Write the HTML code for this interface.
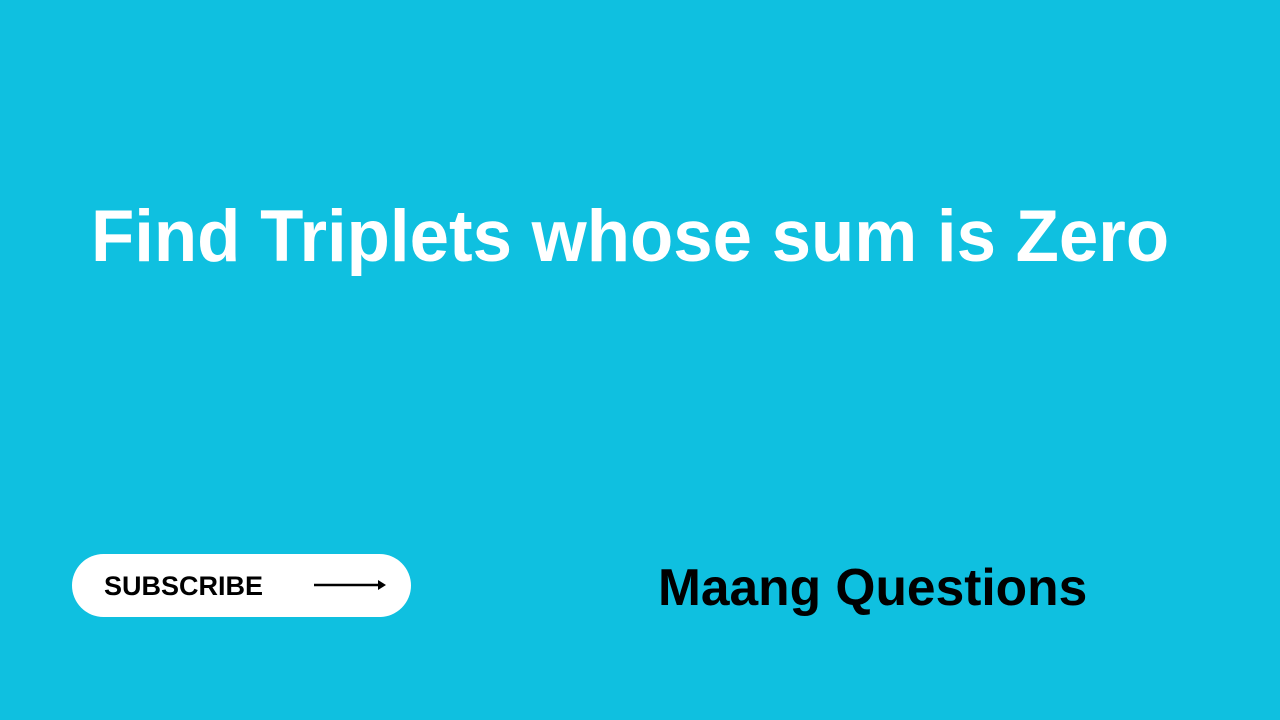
<!DOCTYPE html>
<html><head><style>
html,body{margin:0;padding:0;}
body{width:1280px;height:720px;background:#0fc0e0;position:relative;overflow:hidden;font-family:"Liberation Sans",sans-serif;font-weight:bold;}
.t{position:absolute;left:91px;top:194px;font-size:73px;line-height:86px;color:#fff;white-space:nowrap;transform-origin:0 0;transform:scaleX(0.97);}
.pill{position:absolute;left:72px;top:554px;width:339px;height:63px;background:#fff;border-radius:32px;}
.sub{position:absolute;left:104px;top:570px;font-size:27px;line-height:32px;color:#000;white-space:nowrap;}
.m{position:absolute;left:658px;top:556px;font-size:51.5px;line-height:62px;color:#000;white-space:nowrap;}
</style></head><body>
<div class="t">Find Triplets whose sum is Zero</div>
<div class="pill"></div>
<div class="sub">SUBSCRIBE</div>
<svg style="position:absolute;left:312px;top:578px" width="76" height="14"><line x1="2" y1="7" x2="68" y2="7" stroke="#000" stroke-width="2.5"/><path d="M66 2 L74 7 L66 12 Z" fill="#000"/></svg>
<div class="m">Maang Questions</div>
</body></html>
